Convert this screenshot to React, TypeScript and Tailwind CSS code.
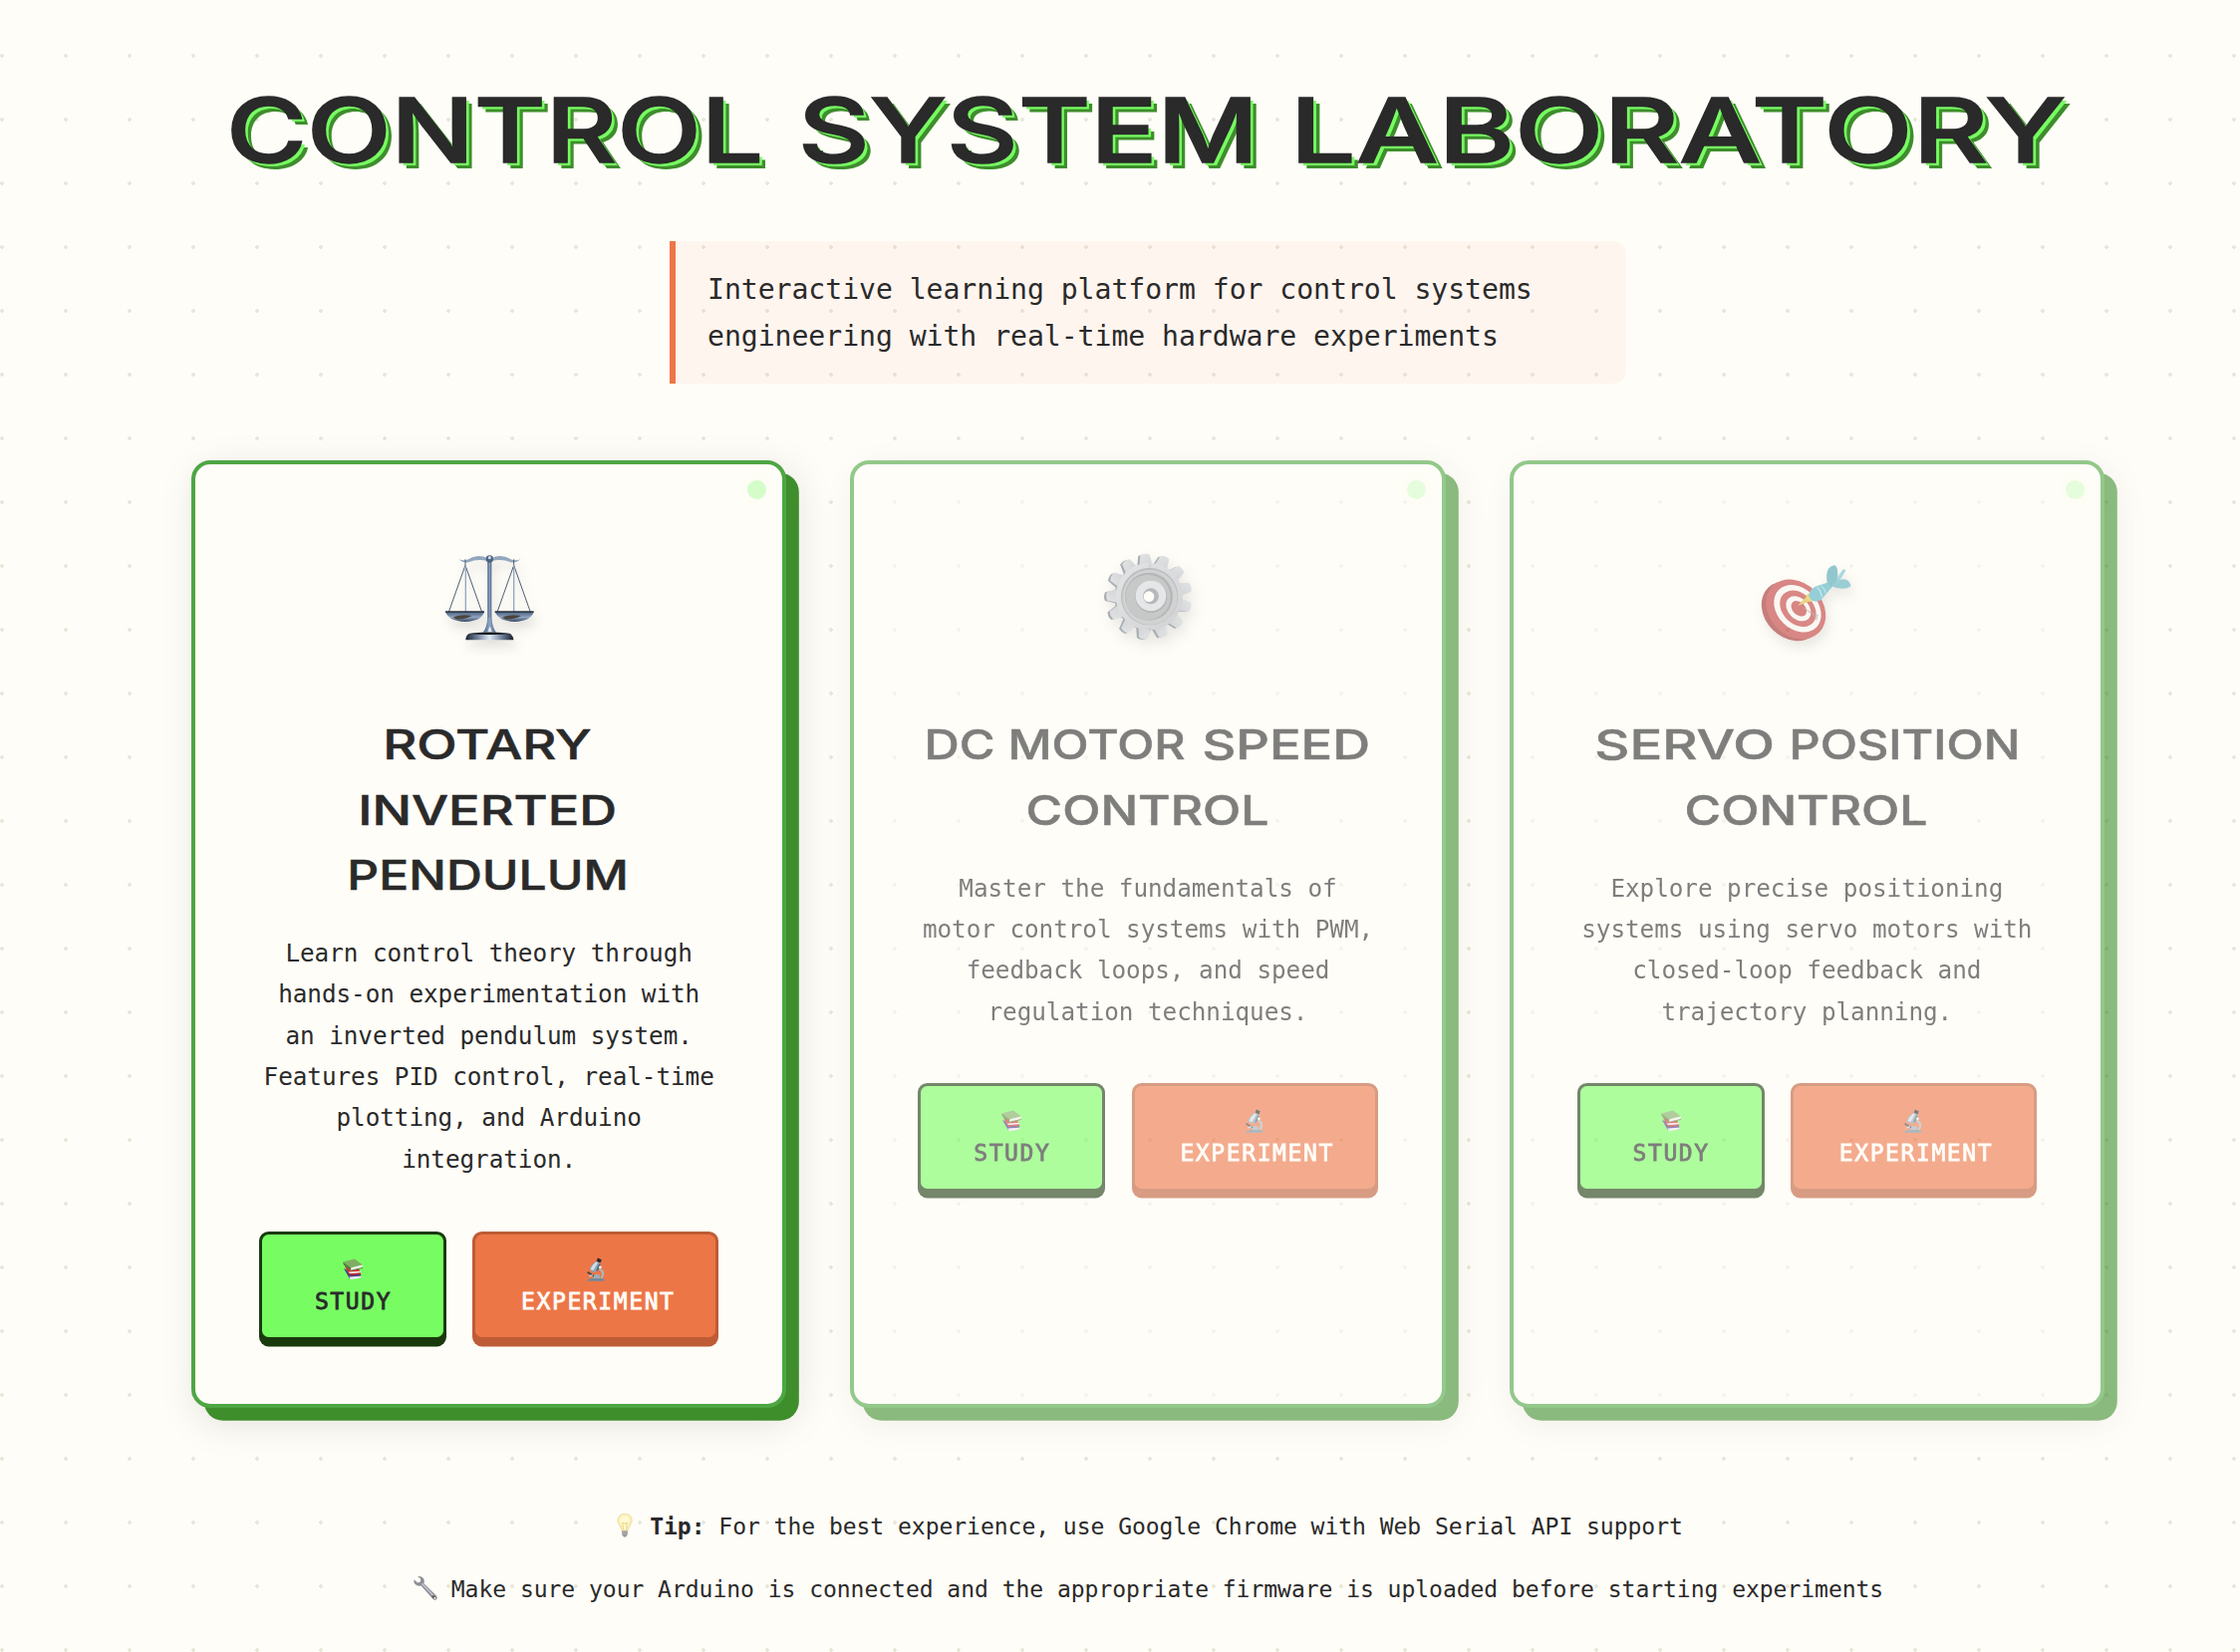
import { useLayoutEffect, useRef, useState } from "react";
import type { ReactNode } from "react";

/* A word set in a wide display cut: its ink is stretched to the given width. */
function WideWord({ text, width }: { text: string; width: number }) {
  const ref = useRef<HTMLSpanElement>(null);
  const [transform, setTransform] = useState("none");
  useLayoutEffect(() => {
    const el = ref.current;
    const ctx = document.createElement("canvas").getContext("2d");
    if (!el || !ctx) return;
    const cs = getComputedStyle(el);
    ctx.font = `${cs.fontWeight} ${cs.fontSize} Inter`;
    const m = ctx.measureText(text);
    const ink = m.actualBoundingBoxRight + m.actualBoundingBoxLeft;
    const s = width / ink;
    setTransform(`translateX(${m.actualBoundingBoxLeft * s}px) scaleX(${s})`);
  }, [text, width]);
  return (
    <span className="inline-block text-left whitespace-nowrap" style={{ width }}>
      <span ref={ref} className="inline-block origin-left" style={{ transform }}>
        {text}
      </span>
    </span>
  );
}

type Line = { width: number; words: [string, number][] };

function ScalesIcon() {
  return (
    <svg width="140" height="130" viewBox="2 0 420 390" className="drop-shadow-[3px_6px_6px_rgba(0,0,0,0.14)]">
      <defs>
        <linearGradient id="steelV" x1="0" x2="1">
          <stop offset="0" stopColor="#3f5470" />
          <stop offset="0.5" stopColor="#8ba5c4" />
          <stop offset="1" stopColor="#475a76" />
        </linearGradient>
        <linearGradient id="pan" x1="0" x2="0" y1="0" y2="1">
          <stop offset="0" stopColor="#4a607f" />
          <stop offset="0.55" stopColor="#8ea4c0" />
          <stop offset="1" stopColor="#35465f" />
        </linearGradient>
        <linearGradient id="foot" x1="0" x2="1">
          <stop offset="0" stopColor="#1e2530" />
          <stop offset="0.25" stopColor="#72839c" />
          <stop offset="0.5" stopColor="#dfe9f5" />
          <stop offset="0.78" stopColor="#66788f" />
          <stop offset="1" stopColor="#171c25" />
        </linearGradient>
      </defs>
      <path d="M120 93 Q130 100 146 95 Q176 76 206 90 V99 Q176 92 150 103 Q132 106 120 93Z" fill="#92a7bd" />
      <path d="M306 93 Q296 100 280 95 Q250 76 220 90 V99 Q250 92 276 103 Q294 106 306 93Z" fill="#92a7bd" />
      <g fill="none" stroke="#4f5d70" strokeWidth="3">
        <path d="M140 94V112L90 253M140 112L190 253" />
        <path d="M286 94V112L236 253M286 112L336 253" />
      </g>
      <path d="M141 112V252M286 112V252" stroke="#93a7c0" strokeWidth="4" />
      <rect x="207" y="100" width="12" height="200" fill="url(#steelV)" />
      <path d="M207 270 Q204 304 190 318 H236 Q222 304 219 270Z" fill="url(#steelV)" />
      <path d="M206 318 Q212 296 214 296 Q218 300 221 318Z" fill="#dbe8f6" />
      <circle cx="213" cy="93" r="11" fill="#4c6180" />
      <circle cx="213" cy="89" r="5" fill="#c7d9ec" />
      <path d="M80 252H197Q190 280 139 282Q90 280 80 252Z" fill="url(#pan)" />
      <path d="M229 252H346Q338 280 288 282Q240 280 229 252Z" fill="url(#pan)" />
      <path d="M80 252H197M229 252H346" stroke="#26303e" strokeWidth="4" />
      <path d="M104 268Q130 258 160 264Q140 276 112 274ZM252 268Q278 258 308 264Q290 276 260 274Z" fill="#4b4540" />
      <path d="M150 318 Q213 308 276 318 Q286 328 285 337 H141 Q141 325 150 318Z" fill="url(#foot)" />
      <path d="M150 318 Q213 309 276 318 Q213 324 150 318Z" fill="#11151b" />
    </svg>
  );
}

function GearIcon() {
  const teeth = Array.from({ length: 13 }, (_, i) => (i * 360) / 13 - 6);
  return (
    <svg width="140" height="130" viewBox="6 0 420 390" className="drop-shadow-[3px_6px_6px_rgba(0,0,0,0.14)]">
      <defs>
        <linearGradient id="gearFace" x1="0" x2="1" y1="0" y2="1">
          <stop offset="0" stopColor="#d3d5da" />
          <stop offset="0.5" stopColor="#c3c6cc" />
          <stop offset="1" stopColor="#b4b6bd" />
        </linearGradient>
      </defs>
      <g fill="#717b85">
        {teeth.map((a) => (
          <path key={a} d="M192 120L200 82Q213 76 226 82L234 120Z" transform={`rotate(${a} 213 208)`} />
        ))}
        <circle cx="213" cy="208" r="98" />
      </g>
      <g fill="url(#gearFace)">
        {teeth.map((a) => (
          <path key={a} d="M199 120L206 80Q220 73 234 80L241 120Z" transform={`rotate(${a} 220 206)`} />
        ))}
        <circle cx="220" cy="206" r="101" />
      </g>
      <circle cx="221" cy="206" r="86" fill="#8e9196" />
      <circle cx="222" cy="208" r="83" fill="#b3b6ba" />
      <circle cx="219" cy="206" r="72" fill="#84878c" />
      <circle cx="216" cy="208" r="68" fill="#a2a5a9" />
      <circle cx="226" cy="207" r="48" fill="#83868b" />
      <circle cx="225" cy="204" r="46" fill="#d5d8df" />
      <circle cx="225" cy="205" r="24" fill="#858c94" />
      <circle cx="219" cy="206" r="16" fill="#fffdf8" />
    </svg>
  );
}

function DartIcon() {
  return (
    <svg width="140" height="130" viewBox="10 0 420 390" className="drop-shadow-[3px_6px_6px_rgba(0,0,0,0.14)]">
      <g transform="rotate(45 185 246)">
        <ellipse cx="180" cy="256" rx="99" ry="80" fill="#a02a2a" />
        <ellipse cx="186" cy="243" rx="99" ry="80" fill="#bf3a38" />
        <ellipse cx="188" cy="238" rx="80" ry="61" fill="#f7f6f2" />
        <ellipse cx="189" cy="237" rx="62" ry="46" fill="#c03c3a" />
        <ellipse cx="190" cy="236" rx="43" ry="31" fill="#f7f6f2" />
        <ellipse cx="191" cy="235" rx="27" ry="19" fill="#bf3836" />
      </g>
      <path d="M200 235L256 262L250 280L238 262Z" fill="#9a7a78" opacity="0.5" />
      <path d="M193 234L222 204L236 218Z" fill="#e0b838" />
      <path d="M217 202L232 194L244 218L230 222Z" fill="#e6c348" />
      <path d="M226 204Q232 180 252 174L290 162Q304 166 298 176L264 216Q246 226 234 216Z" fill="#4fb0c0" />
      <path d="M252 178Q264 190 266 208" fill="none" stroke="#8fd3db" strokeWidth="5" />
      <path d="M264 173Q276 184 278 196" fill="none" stroke="#8fd3db" strokeWidth="4" />
      <path d="M300 168L330 124Q338 122 337 130L314 168Z" fill="#6fc0cc" />
      <path d="M282 164Q274 116 306 112Q318 124 312 158L296 176Z" fill="#4ba4b2" />
      <path d="M294 174Q320 148 342 156Q356 168 352 176Q326 190 294 174Z" fill="#58b0bd" />
    </svg>
  );
}

function BooksIcon() {
  return (
    <svg width="24" height="24" viewBox="0 0 24 24">
      <path d="M3 11L9 21.5L20.5 20.5L16 17Z" fill="#3d3f9a" />
      <path d="M8.5 19L20 18.4L20.6 20.6L9.6 22.2Z" fill="#eceaf2" />
      <path d="M8 17.4L20 17L20.4 18.4L9 19.6Z" fill="#3b3c93" />
      <path d="M4 9L8 16.6L20 16L18 11Z" fill="#d5332f" />
      <path d="M8 14.6L20 13.8L20.2 15.6L9 16.6Z" fill="#f0e9e8" />
      <path d="M8 16.2L20 15.4L20.2 17L9 18.2Z" fill="#b72a2c" />
      <path d="M2 4.4L14 1.6L22 7.4L10 10.6Z" fill="#7fae62" />
      <path d="M2 4.4L10 10.4L10.2 13.4L3 7.6Z" fill="#4c7c38" />
      <path d="M10 10.4L22 7.4L21.4 10.6L10.4 13.2Z" fill="#f5f3ec" />
      <path d="M10.2 13.2L22 10.4" stroke="#4c7c38" strokeWidth="0.9" />
    </svg>
  );
}

function MicroscopeIcon() {
  return (
    <svg width="24" height="24" viewBox="0 0 24 24">
      <path d="M15.5 11.4Q21.4 14.6 17.6 21" fill="none" stroke="#a9b8c3" strokeWidth="2.2" />
      <path d="M3.4 22.4L7 21H19L20.4 22.4V23.8H3.4Z" fill="#74899a" />
      <path d="M8.6 19.6L10.6 17H15.4L16.4 21H9.4Z" fill="#a3adb5" />
      <path d="M3.6 14.8L10 18.8" stroke="#3a444d" strokeWidth="1.7" />
      <path d="M5.4 19L9 17.6" stroke="#c4d0d8" strokeWidth="1.4" />
      <path d="M12.4 3.8L17 6L13.2 14.2L9.6 14.8L5.6 12.6Q6.4 7.6 12.4 3.8Z" fill="#90a4b3" />
      <path d="M12.2 4.6L13.8 5.4L9.4 13L6.6 12Q8 8 12.2 4.6Z" fill="#d3e0ea" />
      <path d="M15 6.2L17 6.8L14 13.4L12 13.6Z" fill="#55697a" />
      <path d="M14 .4L17.8 2.4L16.4 5.4L12.6 3.6Z" fill="#22282e" />
      <circle cx="16.4" cy="9.8" r="1.4" fill="#eef3f6" />
    </svg>
  );
}

function BulbIcon() {
  return (
    <svg width="18" height="26" viewBox="0 0 18 26">
      <path d="M9 1.2C4.6 1.2 1.8 4.2 1.8 8C1.8 11.6 5.4 14 6 18.4H12C12.6 14 16.2 11.6 16.2 8C16.2 4.2 13.4 1.2 9 1.2Z" fill="#fbedb0" stroke="#ead9a0" strokeWidth="0.8" />
      <path d="M9 3C6 3 4 5.2 4 8C4 10.6 7 13 7.4 17H10.6C11 13 14 10.6 14 8C14 5.2 12 3 9 3Z" fill="#fff8d3" />
      <path d="M7.4 17L6.8 10L9 11.4L11.2 10L10.6 17" fill="none" stroke="#e3c469" strokeWidth="0.7" />
      <path d="M6 18.4H12L11.6 22.6L10 24.6H8L6.4 22.6Z" fill="#8d8d8b" />
      <path d="M6.2 20H11.8M6.4 22H11.6" stroke="#c9c9c6" strokeWidth="0.8" />
    </svg>
  );
}

function WrenchIcon() {
  return (
    <svg width="26" height="26" viewBox="0 0 26 26">
      <path d="M1.4 4.2L5.2 7.4L8 6.4L8.2 3.6L5 1Q9.6 .4 11.4 3.8Q12.2 6 11.4 8.2L24 20.6Q25.6 23.4 23.6 24.6Q21.6 25.4 20.2 23.6L8.6 10.6Q4.6 11.4 2.4 8.8Q1 6.8 1.4 4.2Z" fill="#8d8f97" />
      <path d="M9.4 8.2L22 21.4" stroke="#c3c6cd" strokeWidth="1.5" />
      <path d="M20 20.6L23 23.6" stroke="#6d5354" strokeWidth="2.4" />
      <circle cx="22.4" cy="23" r="1" fill="#f4f1ee" />
    </svg>
  );
}

function ModuleCard({ icon, title, children, muted }: { icon: ReactNode; title: Line[]; children: ReactNode; muted?: boolean }) {
  return (
    <article
      className={`relative h-[951px] rounded-[19px] border-4 border-[#4da643] bg-[#fffdf8] px-16 pt-16 text-center shadow-[12.8px_12.8px_0_#3e8e2c,8px_12px_40px_rgba(0,0,0,0.13)] ${muted ? "opacity-60" : ""}`}
    >
      <span className="absolute top-4 right-4 size-[19px] rounded-full bg-[#77fd62] opacity-30 shadow-[0_0_16px_#77fd6244]" />
      <div className="flex h-[130px] justify-center">{icon}</div>
      <h3 className="mt-[55px] font-[Inter] text-[41px] leading-[65.5px] font-medium [-webkit-text-stroke:0.5px_#2a2a2a]">
        {title.map((line, i) => (
          <span key={i} className="mx-auto flex justify-between" style={{ width: line.width }}>
            {line.words.map(([w, width]) => (
              <WideWord key={w} text={w} width={width} />
            ))}
          </span>
        ))}
      </h3>
      <p className="mt-[24.5px] text-[24.32px] leading-[41.34px] tracking-[-0.05px]">{children}</p>
      <div className="mt-[51.5px] flex justify-between">
        <button className="flex h-[109px] w-[188px] flex-col items-center rounded-[9.6px] border-3 border-[#193a0c] bg-[#77fd62] pt-[23px] text-[23px] leading-[32px] tracking-[1.6px] shadow-[0_6.4px_0_#193a0c] [-webkit-text-stroke:0.8px_#2a2a2a]">
          <BooksIcon />
          <span className="mt-1 ml-px">STUDY</span>
        </button>
        <button className="flex h-[109px] w-[247px] flex-col items-center rounded-[9.6px] border-3 border-[#be5c36] bg-[#ed7647] pt-[23px] text-[23px] leading-[32px] tracking-[1.6px] text-[#fffdf8] shadow-[0_6.4px_0_#be5c36] [-webkit-text-stroke:0.8px_#fffdf8]">
          <MicroscopeIcon />
          <span className="mt-1 ml-[5px]">EXPERIMENT</span>
        </button>
      </div>
    </article>
  );
}

export default function App() {
  return (
    <div className="h-[1658px] overflow-hidden bg-[#fffdf8] bg-[radial-gradient(circle_at_2px_56px,#e8e8d9_2px,transparent_2px)] bg-[size:64px_64px] pt-[77px] pl-48 font-['DejaVu_Sans_Mono',monospace] text-[#2a2a2a]">
      <main className="w-[1920px]">
        <h1 className="ml-[40px] flex font-[Inter] text-[89px] leading-[108px] font-medium [-webkit-text-stroke:1.5px_#2a2a2a] [text-shadow:2.8px_3.2px_0_#77fd62,5.4px_6.4px_0_#3e8e2c]">
          <WideWord text="CONTROL" width={530} />
          <span className="ml-[44px]">
            <WideWord text="SYSTEM" width={449} />
          </span>
          <span className="ml-[49px]">
            <WideWord text="LABORATORY" width={767} />
          </span>
        </h1>
        <p className="mx-auto mt-[57px] h-[143px] w-[960px] rounded-r-[12.8px] border-l-6 border-[#ed7647] bg-[#ff7a60]/6 px-8 pt-[25px] text-[28.16px] leading-[47.4px] tracking-[-0.06px]">
          Interactive learning platform for control systems engineering with real-time hardware experiments
        </p>
        <section className="mt-[77px] grid grid-cols-3 gap-16">
          <ModuleCard
            icon={<ScalesIcon />}
            title={[
              { width: 205, words: [["ROTARY", 205]] },
              { width: 255, words: [["INVERTED", 254]] },
              { width: 277, words: [["PENDULUM", 276]] },
            ]}
          >
            Learn control theory through hands-on experimentation with an inverted pendulum system. Features PID control, real-time plotting, and Arduino integration.
          </ModuleCard>
          <ModuleCard
            muted
            icon={<GearIcon />}
            title={[
              { width: 442, words: [["DC", 65], ["MOTOR", 174], ["SPEED", 164]] },
              { width: 240, words: [["CONTROL", 240]] },
            ]}
          >
            Master the fundamentals of motor control systems with PWM, feedback loops, and speed regulation techniques.
          </ModuleCard>
          <ModuleCard
            muted
            icon={<DartIcon />}
            title={[
              { width: 421, words: [["SERVO", 176], ["POSITION", 225]] },
              { width: 240, words: [["CONTROL", 240]] },
            ]}
          >
            Explore precise positioning systems using servo motors with closed-loop feedback and trajectory planning.
          </ModuleCard>
        </section>
        <footer className="mt-[101px] flex flex-col items-center gap-[26px] text-[23.04px] leading-[37px] tracking-[-0.045px]">
          <p className="flex">
            <span className="mt-1 mr-[16px] ml-[3px] w-[18px]">
              <BulbIcon />
            </span>
            <span>
              <strong>Tip:</strong> For the best experience, use Google Chrome with Web Serial API support
            </span>
          </p>
          <p className="flex">
            <span className="mt-1 mr-[13px]">
              <WrenchIcon />
            </span>
            <span>Make sure your Arduino is connected and the appropriate firmware is uploaded before starting experiments</span>
          </p>
        </footer>
      </main>
    </div>
  );
}
